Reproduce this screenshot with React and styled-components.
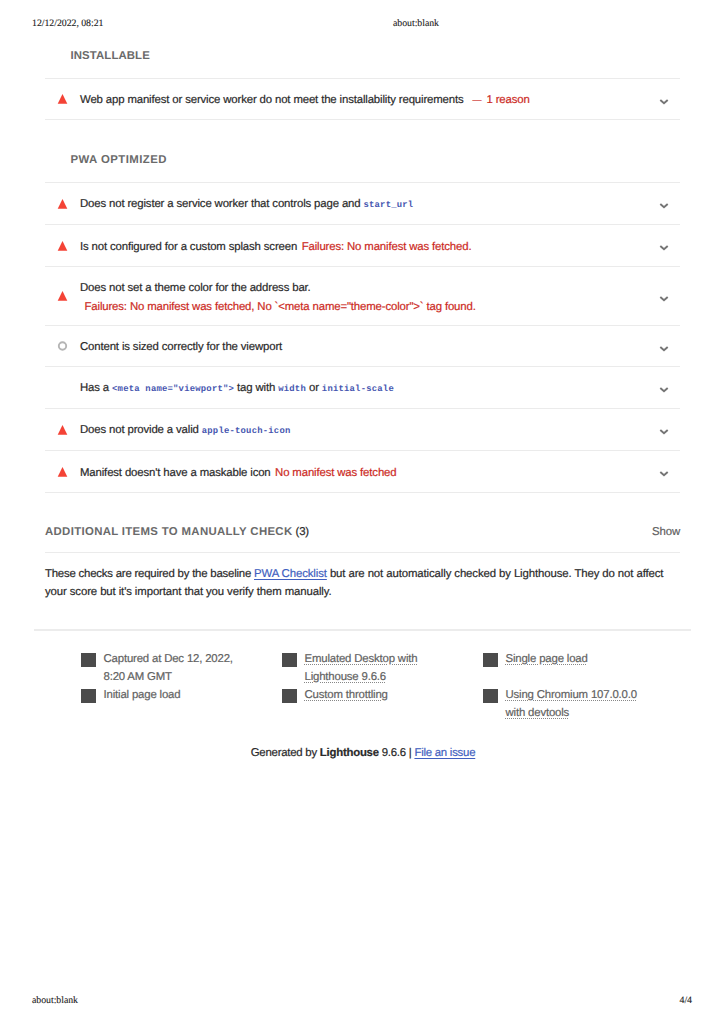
import React from "react";
import styled, { createGlobalStyle } from "styled-components";

const Global = createGlobalStyle`
  * { box-sizing: border-box; }
  body { margin: 0; background: #fff; }
`;

const Page = styled.div`
  width: 723px;
  height: 1024px;
  display: flex;
  flex-direction: column;
  overflow: hidden;
  color: #2a2a2a;
  font: 11.4px/18px "Liberation Sans", Arial, sans-serif;
  letter-spacing: -0.145px;
  text-rendering: geometricPrecision;
  -webkit-text-stroke: 0.2px;
`;

const PrintHeader = styled.header`
  display: grid;
  grid-template-columns: 361px 1fr;
  height: 47px;
  padding: 17px 32px 0;
  font: 9.9px/14px "Liberation Serif", "Times New Roman", serif;
  letter-spacing: -0.06px;
  color: #222;
  -webkit-text-stroke: 0.1px;
`;

const PrintFooter = styled.footer`
  display: flex;
  justify-content: space-between;
  margin-top: auto;
  padding: 0 31px 16px 32px;
  font: 9.9px/14px "Liberation Serif", "Times New Roman", serif;
  letter-spacing: -0.06px;
  color: #222;
  -webkit-text-stroke: 0.1px;
`;

const Report = styled.main`
  padding: 0 43px 0 45px;
`;

const GroupTitle = styled.h2`
  margin: 0;
  padding-left: 25.5px;
  height: ${(p) => p.$height}px;
  padding-top: ${(p) => p.$top}px;
  font-size: 11.4px;
  line-height: 18px;
  font-weight: bold;
  letter-spacing: ${(p) => p.$tracking}px;
  color: #6a6a6a;
  -webkit-text-stroke: 0;
`;

const AuditList = styled.section`
  border-bottom: 1px solid #ebebeb;
`;

const Audit = styled.div`
  display: grid;
  grid-template-columns: 35px 1fr 10px;
  align-items: center;
  height: ${(p) => p.$height || 42}px;
  padding-right: 11px;
  border-top: 1px solid #ebebeb;
`;

const AuditText = styled.div`
  white-space: nowrap;
  padding-top: ${(p) => p.$drop}px;
  line-height: ${(p) => (p.$double ? 19 : 18)}px;
`;

const Mark = styled.svg`
  display: block;
  margin-left: 12px;
`;

const Chevron = styled.svg`
  display: block;
  margin-top: 5px;
`;

const Failure = styled.span`
  color: #cc2a1e;
  margin-left: ${(p) => p.$gap ?? 4.5}px;
`;

const Dash = styled.span`
  font-size: 9px;
  margin-right: 2px;
`;

const Code = styled.code`
  font: bold 8.9px/10px "Liberation Mono", "Courier New", monospace;
  letter-spacing: 0.22px;
  color: #4656b0;
  -webkit-text-stroke: 0;
`;

const ManualHeader = styled.div`
  display: flex;
  justify-content: space-between;
  height: 60px;
  padding-top: 30px;
  border-bottom: 1px solid #ebebeb;
`;

const ManualTitle = styled.span`
  color: #6a6a6a;
  font-weight: bold;
  letter-spacing: 0.33px;
  -webkit-text-stroke: 0;
`;

const Muted = styled.span`
  color: #5f5f5f;
`;

const Description = styled.p`
  margin: 0;
  padding-top: 12px;
  height: 76px;
  white-space: nowrap;
  letter-spacing: -0.11px;
`;

const Lead = styled.span`
  letter-spacing: -0.21px;
`;

const Link = styled.a`
  color: #3f5fc0;
  text-decoration: underline;
  text-underline-offset: 1.5px;
`;

const Meta = styled.section`
  margin: 0 32px 0 34px;
  padding: 19px 0 0 47px;
  border-top: 2px solid #ececec;
  display: grid;
  grid-template-columns: 201px 201px 1fr;
  grid-template-rows: 36px 36px;
`;

const MetaItem = styled.div`
  display: grid;
  grid-template-columns: 22.5px 1fr;
  color: #626262;
  white-space: nowrap;
  letter-spacing: -0.17px;
`;

const MetaBox = styled.i`
  width: 15px;
  height: 14px;
  margin-top: 3px;
  background: #4b4b4b;
`;

const Dotted = styled.span`
  text-decoration: underline dotted #888 1px;
  text-underline-offset: 1.5px;
`;

const Generated = styled.p`
  margin: 22px 0 0 3px;
  text-align: center;
  letter-spacing: -0.24px;
`;

function StatusMark({ type }) {
  if (type === "none") return <span />;
  return (
    <Mark width="11" height="10" viewBox="0 0 11 10">
      {type === "fail" ? (
        <path d="M5.5 0 10.3 9.8H.7z" fill="#f44336" />
      ) : (
        <circle cx="5.5" cy="5" r="3.7" fill="none" stroke="#b5b5b5" strokeWidth="1.9" />
      )}
    </Mark>
  );
}

function Row({ type = "fail", height, double, drop = 2, children }) {
  return (
    <Audit $height={height}>
      <StatusMark type={type} />
      <AuditText $double={double} $drop={drop}>{children}</AuditText>
      <Chevron width="10" height="6" viewBox="0 0 10 6">
        <path d="M1.3 1 5 4.3 8.7 1" fill="none" stroke="#757575" strokeWidth="1.9" />
      </Chevron>
    </Audit>
  );
}

function MetaEntry({ plain, lines }) {
  const Text = plain ? "span" : Dotted;
  return (
    <MetaItem>
      <MetaBox />
      <div>
        {lines.map((line) => (
          <div key={line}>
            <Text>{line}</Text>
          </div>
        ))}
      </div>
    </MetaItem>
  );
}

export default function App() {
  return (
    <>
      <Global />
      <Page>
        <PrintHeader>
          <span>12/12/2022, 08:21</span>
          <span>about:blank</span>
        </PrintHeader>
        <Report>
          <GroupTitle $height={31} $top={0} $tracking={0.1}>INSTALLABLE</GroupTitle>
          <AuditList>
            <Row height={41}>
              Web app manifest or service worker do not meet the installability requirements
              <Failure $gap={9}><Dash>—</Dash> 1 reason</Failure>
            </Row>
          </AuditList>
          <GroupTitle $height={62} $top={31} $tracking={0.44}>PWA OPTIMIZED</GroupTitle>
          <AuditList>
            <Row drop={0}>
              Does not register a service worker that controls page and <Code>start_url</Code>
            </Row>
            <Row>
              Is not configured for a custom splash screen
              <Failure>Failures: No manifest was fetched.</Failure>
            </Row>
            <Row height={59} double drop={4}>
              Does not set a theme color for the address bar.
              <br />
              <Failure>{'Failures: No manifest was fetched, No `<meta name="theme-color">` tag found.'}</Failure>
            </Row>
            <Row type="neutral" height={41}>
              Content is sized correctly for the viewport
            </Row>
            <Row type="none" drop={0}>
              Has a <Code>{'<meta name="viewport">'}</Code> tag with <Code>width</Code> or{" "}
              <Code>initial-scale</Code>
            </Row>
            <Row drop={0}>
              Does not provide a valid <Code>apple-touch-icon</Code>
            </Row>
            <Row>
              Manifest doesn't have a maskable icon
              <Failure>No manifest was fetched</Failure>
            </Row>
          </AuditList>
          <ManualHeader>
            <span>
              <ManualTitle>ADDITIONAL ITEMS TO MANUALLY CHECK</ManualTitle> (3)
            </span>
            <Muted>Show</Muted>
          </ManualHeader>
          <Description>
            <Lead>These checks are required by the baseline </Lead>
            <Link>PWA Checklist</Link> but are not automatically checked by Lighthouse. They do
            not affect
            <br />
            your score but it's important that you verify them manually.
          </Description>
        </Report>
        <Meta>
          <MetaEntry plain lines={["Captured at Dec 12, 2022,", "8:20 AM GMT"]} />
          <MetaEntry lines={["Emulated Desktop with", "Lighthouse 9.6.6"]} />
          <MetaEntry lines={["Single page load"]} />
          <MetaEntry plain lines={["Initial page load"]} />
          <MetaEntry lines={["Custom throttling"]} />
          <MetaEntry lines={["Using Chromium 107.0.0.0", "with devtools"]} />
        </Meta>
        <Generated>
          Generated by <b>Lighthouse</b> 9.6.6 | <Link>File an issue</Link>
        </Generated>
        <PrintFooter>
          <span>about:blank</span>
          <span>4/4</span>
        </PrintFooter>
      </Page>
    </>
  );
}
